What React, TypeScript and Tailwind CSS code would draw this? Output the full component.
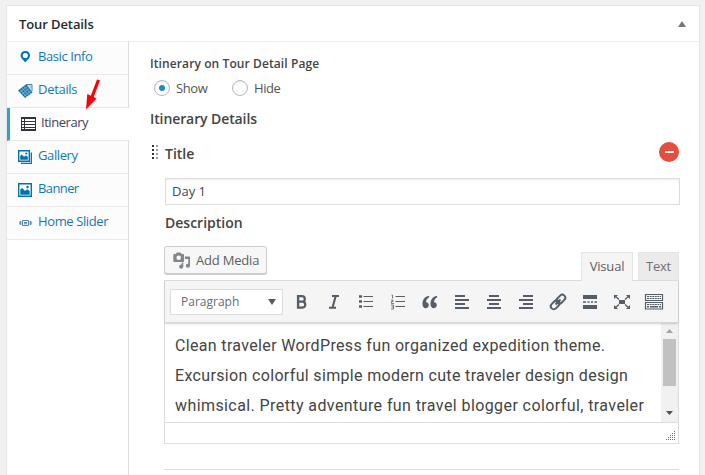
import React from "react";

const PinIcon = () => (
  <svg className="w-[14px] h-[16px] shrink-0" viewBox="0 0 14 16">
    <path fillRule="evenodd" fill="#0073aa" d="M6.300 2C3.600 2 1.600 3.900 1.600 6.400c0 2.700 2.600 4 4.700 7.100 2.100-3.100 4.700-4.400 4.700-7.100C11 3.900 9 2 6.300 2Zm0 1.900a2.600 2.600 0 1 1 0 5.200 2.600 2.600 0 0 1 0-5.200Z" />
  </svg>
);

const TagIcon = () => (
  <svg className="w-[16px] h-[16px] shrink-0" viewBox="0 0 16 16">
    <path fill="#1479ac" d="M0 7.500 8.500 1l6 8.500L7 15Z" />
    <path d="M2 6.500 9 14M4 5l7 7.500M6 3.500l7 7.500M1.700 9.500l8.300-6.500M3.500 11.500l8.300-6.500M5.500 13.500l8-6.300" stroke="#a9cfe2" strokeWidth=".6" />
    <path d="M8.500 1.500H14V8" fill="none" stroke="#4d81a5" strokeWidth="1" />
    <circle cx="11.800" cy="4" r="1.300" fill="#fff" stroke="#4d81a5" strokeWidth=".6" />
  </svg>
);

const TableIcon = () => (
  <svg className="w-[15px] h-[14px] shrink-0" viewBox="0 0 15 14" shapeRendering="crispEdges">
    <path fill="#32323c" d="M0 0h15v14H0Z" />
    <path fill="#fff" d="M1 2h2v2H1zM4 2h10v2H4zM1 5h2v2H1zM4 5h10v2H4zM1 8h2v2H1zM4 8h10v2H4zM1 11h2v1H1zM4 11h10v1H4z" />
  </svg>
);

const PictureIcon = ({ stacked = false }: { stacked?: boolean }) => (
  <svg className="w-[15px] h-[15px] shrink-0" viewBox="0 0 15 15">
    {stacked ? (
      <>
        <path d="M13.300 2.500v10.800H3" stroke="#0073aa" strokeWidth="1.300" fill="none" />
        <path d="M.7.700h10.600v10.600H.7Z" stroke="#0073aa" strokeWidth="1.400" fill="#fcfcfc" />
        <path d="M2.200 9.800V6L3.700 4.500l2.300 2.300 1.800-1.400 2 1.400v3Z" fill="#0073aa" />
        <circle cx="8.200" cy="3.400" r="1" fill="#0073aa" />
      </>
    ) : (
      <>
        <path d="M.7.700h12.600v12.600H.7Z" stroke="#0073aa" strokeWidth="1.400" fill="#fcfcfc" />
        <path d="M2.300 11.700V6.500L4.300 5l2.700 3 2-1.800 2.700 1.700v3.800Z" fill="#0073aa" />
        <circle cx="9.500" cy="4" r="1.200" fill="#0073aa" />
      </>
    )}
  </svg>
);

const SliderIcon = () => (
  <svg className="w-[14px] h-[8px] shrink-0" viewBox="0 0 14 8" fill="none" stroke="#4f88ab">
    <path d="M3.500 1.500h6v5h-6ZM5 3.500h3M5 4.800h3" />
    <path d="M1.700 2v4M11.300 2v4" strokeWidth="1.200" />
    <path d="M.4 2.500v3M12.600 2.500v3" strokeWidth=".7" />
  </svg>
);

const MediaIcon = () => (
  <svg className="w-[18px] h-[17px] shrink-0" viewBox="0 0 18 17" fill="#82878c">
    <path fillRule="evenodd" d="M1.300 2h1.500L3.700.5h4L8.600 2h1.500q1 0 1 1v6q0 1-1 1h-8.800q-1 0-1-1V3q0-1 1-1Zm4.400 1.500a2.300 2.300 0 1 0 0 4.600 2.300 2.300 0 0 0 0-4.600Z" />
    <path d="M12 4.500h5v9.200a2.100 2.100 0 1 1-1.700-2V7H12Z" />
    <path d="M8.700 10.500h1.600v4a2.100 2.100 0 1 1-1.600-2Z" />
  </svg>
);

const Tool = ({ children }: { children: React.ReactNode }) => (
  <svg className="w-[20px] h-[20px] shrink-0" viewBox="0 0 20 20" fill="none" stroke="#555d66">
    {children}
  </svg>
);

const Align = ({ rows }: { rows: number[][] }) => (
  <Tool>
    <g fill="#555d66" stroke="none" shapeRendering="crispEdges">
      {rows.map(([x, w], i) => (
        <rect key={i} x={x} y={3 + i * 4} width={w} height="2" />
      ))}
    </g>
  </Tool>
);

const items = [
  { label: "Basic Info", icon: <PinIcon />, pad: "pl-[12px] gap-[5px] pb-[3px]", track: "tracking-[-0.4px]" },
  { label: "Details", icon: <TagIcon />, pad: "pl-[11px] gap-[4px] pb-[1px]", track: "tracking-[-0.3px]" },
  { label: "Itinerary", icon: <TableIcon />, pad: "pl-[11px] gap-[5px] pb-[1px]", track: "tracking-[-0.45px]" },
  { label: "Gallery", icon: <PictureIcon stacked />, pad: "pl-[11px] gap-[5px]", track: "tracking-[-0.4px]" },
  { label: "Banner", icon: <PictureIcon />, pad: "pl-[11px] gap-[5px]", track: "tracking-[-0.6px]" },
  { label: "Home Slider", icon: <SliderIcon />, pad: "pl-[12px] gap-[5px]", track: "tracking-[-0.38px]" },
];

const Sidebar = () => (
  <nav className="w-[122px] shrink-0 border-r border-[#ddd]">
    {items.map((it) => {
      const active = it.label === "Itinerary";
      return (
        <div
          key={it.label}
          className={`flex h-[33px] items-center border-b border-[#e9e9e9] text-[13px] ${it.pad} ${it.track} ${
            active ? "-mr-px border-l-[3px] border-l-[#2ea2cc] bg-white text-[#45405a]" : "bg-[#fcfcfc] text-[#1478ad]"
          }`}
        >
          {it.icon}
          <span className={it.label === "Basic Info" ? "" : "-translate-y-px"}>{it.label}</span>
        </div>
      );
    })}
  </nav>
);

const Radio = ({ label, on }: { label: string; on?: boolean }) => (
  <label className="flex w-[78px] items-center gap-[6px] text-[13px] tracking-[-0.4px] text-[#555]">
    <span className="flex h-4 w-4 items-center justify-center rounded-full border border-[#b4b9be] bg-white shadow-[inset_0_1px_2px_rgba(0,0,0,0.1)]">
      {on && <span className="h-[6px] w-[6px] rounded-full bg-[#1e8cbe]" />}
    </span>
    <span className="translate-y-px">{label}</span>
  </label>
);

const Toolbar = () => (
  <div className="relative flex h-[42px] items-center border-b border-[#d5d5d5] bg-[#f5f5f5] pl-[5px] shadow-[0_1px_2px_rgba(0,0,0,0.18)]">
    <div className="flex h-[26px] w-[113px] items-center justify-between border border-[#ddd] bg-white pl-[10px] pr-[6px] text-[12px] text-[#656c74]">
      Paragraph
      <svg className="h-[6px] w-[8px]" viewBox="0 0 8 6"><path d="M0 0h8L4 6Z" fill="#555d66" /></svg>
    </div>
    <div className="ml-[9px] flex gap-3">
      <Tool><path d="M6 4.200h4q2.800 0 2.800 2.700T10 9.600H6h4.300q3 0 3 3t-3 3H6ZM6.200 3v13.600" strokeWidth="2.200" /></Tool>
      <Tool><path d="M8 4h7M5 15.800h7M11.700 4l-3.300 12" strokeWidth="2.100" /></Tool>
      <Tool><path d="M7.500 4.500H17M7.500 9.500H17M7.500 14.500H17" /><path d="M3 4.500h3M3 9.500h3M3 14.500h3" strokeWidth="2.600" /></Tool>
      <Tool><path d="M7.500 4.500H17M7.500 9.500H17M7.500 14.500H17" /><path d="M3.500 3h1V6.500M3 8h2v1.500H3.500v2H6M3 13h2.500v4H3M3.500 15h2" strokeWidth=".8" /></Tool>
      <Tool><path d="M9 3.700C4.800 4.600 2.500 7.600 2.500 12c0 2.600 1.300 4.200 3.300 4.200 1.800 0 3-1.300 3-3.100 0-1.700-1.100-2.900-2.800-2.900 0-2.300 1.200-4 3.200-5ZM17 3.700c-4.200.9-6.500 3.900-6.500 8.300 0 2.600 1.300 4.200 3.300 4.200 1.800 0 3-1.300 3-3.100 0-1.700-1.100-2.900-2.800-2.900 0-2.300 1.200-4 3.200-5Z" fill="#555d66" stroke="none" /></Tool>
      <Align rows={[[3, 10], [3, 14], [3, 10], [3, 14]]} />
      <Align rows={[[5, 10], [3, 14], [5, 10], [3, 14]]} />
      <Align rows={[[7, 10], [3, 14], [7, 10], [3, 14]]} />
      <Tool><g transform="rotate(-45 10 10)" strokeWidth="1.900"><rect x="1" y="7" width="10" height="6" rx="3" /><rect x="9" y="7" width="10" height="6" rx="3" /><path d="M6.500 10h7" /></g></Tool>
      <Tool><path d="M3 5h14M3 15h14" strokeWidth="4" /><path d="M3 10h3M7.500 10h2M11 10h2M14.500 10H17" strokeWidth="1.500" /></Tool>
      <Tool><path d="M7 8h6v4H7Z" fill="#555d66" stroke="none" /><path d="m3 4 4 3.500M17 4l-4 3.500M3 16l4-3.500M17 16l-4-3.500" strokeWidth="1.300" /><path d="M2 3h4L2 7ZM18 3h-4l4 4ZM2 17h4l-4-4ZM18 17h-4l4-4Z" fill="#555d66" stroke="none" /></Tool>
      <Tool><path d="M1.500 2.500h17v6h-17ZM1.500 10.500h17v6.500h-17Z" strokeWidth="1.200" /><path d="M3 4.500h14M3 6.500h14M3 12.500h14" strokeWidth="1.200" strokeDasharray="2 .6" /><path d="M3 14.700h2M6 14.700h8M15 14.700h2" strokeWidth="1.400" /></Tool>
    </div>
  </div>
);

export default function App() {
  return (
    <div className="h-[475px] w-[705px] overflow-hidden bg-[#f1f1f1] pl-[6px] pt-[5px] font-['Open_Sans',sans-serif]">
      <div className="h-[480px] w-[694px] border border-[#e5e5e5] bg-white">
        <header className="flex h-[36px] items-center justify-between border-b border-[#eee] pl-[12px] pr-[13px]">
          <h2 className="translate-y-px text-[13px] font-semibold tracking-[-0.1px] text-[#23282d]">Tour Details</h2>
          <svg className="h-[6px] w-[8px]" viewBox="0 0 8 6"><path d="M0 6h8L4 0Z" fill="#72777c" /></svg>
        </header>
        <div className="relative flex h-[440px]">
          <Sidebar />
          <svg className="absolute left-[78px] top-[36px] h-[32px] w-[17px]" viewBox="0 0 17 32">
            <path d="M1 31.500 2.300 16 5.800 17.700 12 1.500 15 2.200 8.700 19 11.500 20.600Z" fill="#fb0007" />
          </svg>
          <main className="w-[552px] pl-[21px] text-[#444]">
            <h3 className="mt-[13px] h-[18px] text-[12px] font-semibold leading-[18px] tracking-[0.1px]">Itinerary on Tour Detail Page</h3>
            <div className="ml-[4px] mt-[7px] flex h-[16px] items-center"><Radio label="Show" on /><Radio label="Hide" /></div>
            <h3 className="mt-[13px] h-[20px] text-[14px] font-semibold leading-[20px] tracking-[-0.1px]">Itinerary Details</h3>
            <div className="mt-[13px] flex h-[20px] items-center">
              <svg className="mr-[7px] h-[15px] w-[8px]" viewBox="0 0 8 15" shapeRendering="crispEdges">
                {[0, 4, 8, 12].map((y) => (
                  <g key={y}><rect x="2" y={y} width="2" height="2" fill="#333" /><rect x="6" y={y} width="2" height="2" fill="#999" /></g>
                ))}
              </svg>
              <h4 className="translate-y-px text-[14px] font-semibold">Title</h4>
              <span className="ml-auto mr-[2px] flex h-5 w-5 items-center justify-center rounded-full bg-[#e74c3c]"><span className="h-[2px] w-[9px] bg-white" /></span>
            </div>
            <div className="ml-[15px]">
              <div className="mt-[16px] flex h-[27px] w-[515px] items-center border border-[#ddd] pl-[6px] pt-px text-[13px] text-[#42474c] shadow-[inset_0_1px_2px_rgba(0,0,0,0.07)]">Day 1</div>
              <h4 className="mt-[8px] h-[20px] text-[14px] font-semibold leading-[20px]">Description</h4>
            </div>
            <div className="ml-[14px] flex h-[47px] w-[515px] justify-between">
              <button className="mt-[13px] flex h-[28px] w-[103px] items-center gap-[5px] rounded-[3px] border border-[#ccc] bg-[#f7f7f7] pl-[8px] text-[13px] tracking-[-0.2px] text-[#606060] shadow-[0_1px_0_#ccc]"><MediaIcon /><span className="translate-y-px">Add Media</span></button>
              <div className="z-10 mt-[19px] flex h-[29px] gap-[5px] text-[13px] tracking-[-0.2px] text-[#606060]">
                <div className="flex h-[29px] w-[52px] items-center justify-center border border-b-0 border-[#e5e5e5] bg-[#f5f5f5]">Visual</div>
                <div className="flex h-[28px] w-[41px] items-center justify-center border border-b-0 border-[#e5e5e5] bg-[#ebebeb] text-[#707070]">Text</div>
              </div>
            </div>
            <section className="ml-[14px] h-[164px] w-[515px] border border-[#ddd]">
              <Toolbar />
              <div className="flex h-[99px]">
                <div className="flex-1 overflow-hidden whitespace-nowrap pl-[10px] pt-[8px] font-['Roboto',sans-serif] text-[16px] leading-[30px]">
                  <p className="tracking-[0.34px]">Clean traveler WordPress fun organized expedition theme.</p>
                  <p className="tracking-[0.34px]">Excursion colorful simple modern cute traveler design design</p>
                  <p className="tracking-[0.41px]">whimsical. Pretty adventure fun travel blogger colorful, traveler</p>
                </div>
                <div className="flex w-[17px] flex-col items-center bg-[#f1f1f1] pt-[6px]">
                  <svg className="h-[4px] w-[7px]" viewBox="0 0 7 4"><path d="M0 4h7L3.500 0Z" fill="#a3a3a3" /></svg>
                  <div className="mt-[6px] h-[47px] w-[13px] bg-[#c1c1c1]" />
                  <svg className="mt-[25px] h-[4px] w-[7px]" viewBox="0 0 7 4"><path d="M0 0h7L3.500 4Z" fill="#505050" /></svg>
                </div>
              </div>
              <div className="flex h-[21px] items-end justify-end border-t border-[#ddd] pb-[2px] pr-[2px]">
                <svg className="h-[10px] w-[10px]" viewBox="0 0 10 10" shapeRendering="crispEdges" fill="#80608c">
                  {[0, 1, 2, 3, 4].flatMap((r) => Array.from({ length: r + 1 }, (_, c) => <rect key={`${r}-${c}`} x={8 - c * 2} y={r * 2} width="1" height="1" />))}
                </svg>
              </div>
            </section>
            <hr className="ml-[14px] mt-[25px] w-[515px] border-[#ddd]" />
          </main>
        </div>
      </div>
    </div>
  );
}
